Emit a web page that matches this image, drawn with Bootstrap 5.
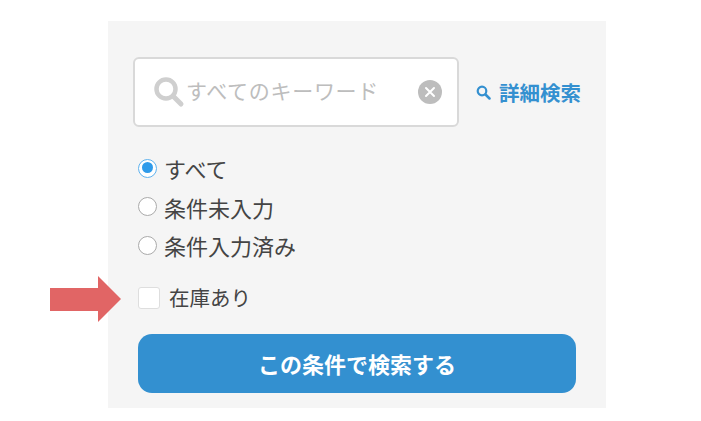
<!DOCTYPE html>
<html lang="ja">
<head>
<meta charset="utf-8">
<title>検索</title>
<link href="https://cdn.jsdelivr.net/npm/bootstrap@5.3.0/dist/css/bootstrap.min.css" rel="stylesheet">
<style>
html,body{height:100%;overflow:hidden;background:#fff}
body{font-family:"Noto Sans CJK JP","Liberation Sans",sans-serif;padding:21px 95px 13px 108px;color:#444}
.panel-box{background:#f5f5f5;width:498px;height:387px;padding:36px 0 0 25px;position:relative}
.kw-box{flex:none;width:326px;height:70px;background:#fff;border:2px solid #d9d9d9;border-radius:6px;padding:0 15px 0 18px}
.kw-text{font-size:21px;color:#bdbdbd;letter-spacing:.7px;margin-left:1px;padding-bottom:4px;line-height:1}
.kw-clear{width:24px;height:24px;background:#bdbdbd;border-radius:50%}
.adv-link{font-size:20.5px;font-weight:700;color:#3490d0;text-decoration:none;margin-left:17px;line-height:1;white-space:nowrap}
.choice-group{padding-left:5px;margin-top:22px}
.choice-row{height:38.5px;font-size:22px;line-height:1}
.dot{width:19px;height:19px;border-radius:50%;border:1.5px solid #aaa;background:#fff;margin-right:7px;flex:none}
.dot.on{border-color:#5fb2ee;padding:2.5px;background:#fff}
.dot.on::after{content:"";display:block;width:11px;height:11px;border-radius:50%;background:#2f9bea}
.tick-row{font-size:20.5px;margin-top:21px;height:24px;line-height:1}
.tick{width:22px;height:22px;background:#fff;border:1px solid #dedede;border-radius:3px;margin-right:9px;flex:none}
.go-btn{display:block;width:438px;height:59px;margin:24px 0 0 5px;background:#3390d0;border:0;border-radius:14px;color:#fff;font-size:22px;font-weight:700;line-height:1}
.go-btn:hover{background:#3390d0;color:#fff}
.pointer{position:absolute;left:-58px;top:255px}
</style>
</head>
<body>
<div class="panel-box">
  <svg class="pointer" width="71" height="46" viewBox="0 0 71 46"><path d="M0 12H48V0L71 23 48 46V35H0Z" fill="#e16565"/></svg>
  <form>
    <div class="d-flex align-items-center">
      <div class="kw-box d-flex align-items-center">
        <svg width="32" height="32" viewBox="0 0 32 32" class="flex-none"><circle cx="13" cy="13" r="9.5" fill="none" stroke="#cfcfcf" stroke-width="4.5"/><path d="M20 20 28 28" stroke="#cfcfcf" stroke-width="5" stroke-linecap="round"/></svg>
        <span class="kw-text flex-grow-1">すべてのキーワード</span>
        <span class="kw-clear d-flex align-items-center justify-content-center">
          <svg width="12" height="12" viewBox="0 0 12 12"><path d="M2 2 10 10M10 2 2 10" stroke="#fff" stroke-width="2" stroke-linecap="round"/></svg>
        </span>
      </div>
      <a href="#" class="adv-link d-flex align-items-center">
        <svg width="15" height="15" viewBox="0 0 15 15" class="me-2"><circle cx="6" cy="6" r="4.3" fill="none" stroke="#3490d0" stroke-width="2.2"/><path d="M9.5 9.5 13.5 13.5" stroke="#3490d0" stroke-width="2.5" stroke-linecap="round"/></svg>詳細検索
      </a>
    </div>
    <div class="choice-group">
      <div class="choice-row d-flex align-items-center"><span class="dot on"></span>すべて</div>
      <div class="choice-row d-flex align-items-center"><span class="dot"></span>条件未入力</div>
      <div class="choice-row d-flex align-items-center"><span class="dot"></span>条件入力済み</div>
      <div class="tick-row d-flex align-items-center"><span class="tick"></span>在庫あり</div>
    </div>
    <button type="button" class="btn go-btn">この条件で検索する</button>
  </form>
</div>
<script src="https://cdn.jsdelivr.net/npm/bootstrap@5.3.0/dist/js/bootstrap.bundle.min.js"></script>
</body>
</html>
